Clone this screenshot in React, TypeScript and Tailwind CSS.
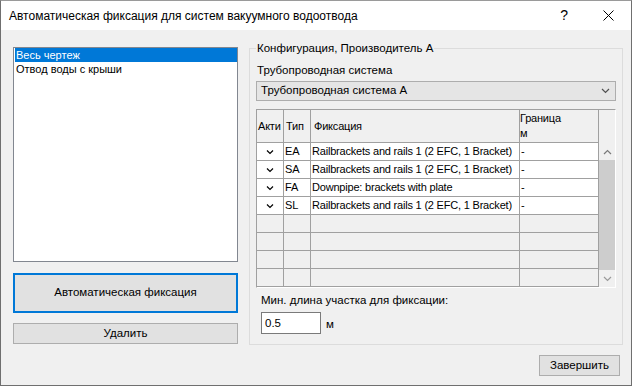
import React from 'react';

const rows = [
  { tip: 'EA', fix: 'Railbrackets and rails 1 (2 EFC, 1 Bracket)', gr: '-' },
  { tip: 'SA', fix: 'Railbrackets and rails 1 (2 EFC, 1 Bracket)', gr: '-' },
  { tip: 'FA', fix: 'Downpipe: brackets with plate', gr: '-' },
  { tip: 'SL', fix: 'Railbrackets and rails 1 (2 EFC, 1 Bracket)', gr: '-' },
];

function Check() {
  return (
    <svg width="8" height="6" viewBox="0 0 8 6">
      <path d="M1 1.5 L4 4.5 L7 1.5" fill="none" stroke="#000" strokeWidth="1.2" />
    </svg>
  );
}

function Chevron({ up = false, color = '#606060' }: { up?: boolean; color?: string }) {
  return (
    <svg width="9" height="6" viewBox="0 0 9 6">
      <path d={up ? 'M1 5 L4.5 1.5 L8 5' : 'M1 1 L4.5 4.5 L8 1'} fill="none" stroke={color} strokeWidth="1.2" />
    </svg>
  );
}

const cell = 'border-r border-b border-[#a0a0a0] flex items-center overflow-hidden whitespace-nowrap';

export default function App() {
  const empty = [0, 1, 2, 3];

  return (
    <div className="w-[632px] h-[386px] flex flex-col border border-[#6f6f6f] border-t-[#9a9a9a] bg-[#f0f0f0] text-black font-['Liberation_Sans',Arial,sans-serif] text-[11.5px] overflow-hidden">
      {/* title bar */}
      <div className="h-[29px] bg-white flex items-center pl-[8px] pr-[17px]">
        <span className="text-[12px] flex-1">Автоматическая фиксация для систем вакуумного водоотвода</span>
        <span className="text-[14px] mr-[35px] mt-[-1px]">?</span>
        <svg width="11" height="11" viewBox="0 0 11 11">
          <path d="M0.5 0.5 L10.5 10.5 M10.5 0.5 L0.5 10.5" stroke="#000" strokeWidth="1" />
        </svg>
      </div>

      <div className="flex-1 flex flex-col">
        <div className="flex items-start pl-[12px]">
          {/* left column */}
          <div className="w-[225px] pt-[17px] flex flex-col">
            <div className="h-[215px] bg-white border border-[#828790] pl-[1px] text-[11px]">
              <div className="h-[14px] bg-[#0078d7] text-white flex items-center pl-[1px]">Весь чертеж</div>
              <div className="h-[14px] flex items-center pl-[1px]">Отвод воды с крыши</div>
            </div>
            <button className="mt-[11px] h-[40px] bg-[#e1e1e1] border-2 border-[#0078d7] flex items-center justify-center">
              Автоматическая фиксация
            </button>
            <button className="mt-[10px] h-[21px] bg-[#e1e1e1] border border-[#adadad] flex items-center justify-center">
              Удалить
            </button>
          </div>

          {/* group box */}
          <div className="relative ml-[11px] mt-[18px] w-[374px] h-[297px] border border-[#dcdcdc] pl-[6px] pt-[14px]">
            <span className="absolute left-[6px] top-[-8px] leading-[14px] px-[1px] bg-[#f0f0f0]">
              Конфигурация, Производитель А
            </span>
            <div className="leading-[14px] pl-[1px]">Трубопроводная система</div>

            <div className="mt-[4px] w-[360px] h-[20px] border border-[#adadad] bg-[#e5e5e5] flex items-center pl-[4px] pr-[5px]">
              <span className="flex-1">Трубопроводная система А</span>
              <Chevron color="#505050" />
            </div>

            {/* grid */}
            <div className="mt-[8px] w-[360px] h-[179px] flex border border-t-[#a0a0a0] border-l-[#a0a0a0] border-r-white border-b-white text-[11px] tracking-[-0.2px]">
              <div className="w-[342px] grid grid-cols-[27px_27px_209px_79px] grid-rows-[33px] auto-rows-[18px] content-start">
                <div className={`${cell} pl-[1px]`}>Акти</div>
                <div className={`${cell} pl-[2px]`}>Тип</div>
                <div className={`${cell} pl-[3px]`}>Фиксация</div>
                <div className={`${cell} leading-[15px]`}>
                  <span>Граница<br />м</span>
                </div>
                {rows.map((r) => (
                  <React.Fragment key={r.tip}>
                    <div className={`${cell} bg-white justify-center`}><Check /></div>
                    <div className={`${cell} bg-white pl-[1px]`}>{r.tip}</div>
                    <div className={`${cell} bg-white pl-[1px]`}>{r.fix}</div>
                    <div className={`${cell} bg-white pl-[1px]`}>{r.gr}</div>
                  </React.Fragment>
                ))}
                {empty.map((i) => (
                  <React.Fragment key={i}>
                    <div className={cell} />
                    <div className={cell} />
                    <div className={cell} />
                    <div className={cell} />
                  </React.Fragment>
                ))}
              </div>
              <div className="w-[16px] flex flex-col">
                <div className="h-[33px]" />
                <div className="h-[17px] flex items-center justify-center"><Chevron up color="#7a7a7a" /></div>
                <div className="flex-1 bg-[#cdcdcd]" />
                <div className="h-[17px] flex items-center justify-center"><Chevron color="#9a9a9a" /></div>
              </div>
            </div>

            <div className="mt-[5px] leading-[14px] pl-[5px]">Мин. длина участка для фиксации:</div>
            <div className="mt-[5px] flex items-end pl-[5px]">
              <div className="w-[60px] h-[22px] bg-white border border-[#7a7a7a] pl-[3px] pt-[2px]">0.5</div>
              <span className="ml-[5px] mb-[4px] leading-[12px]">м</span>
            </div>
          </div>
        </div>

        <div className="flex justify-end pr-[11px] mt-[10px]">
          <button className="w-[81px] h-[21px] bg-[#e1e1e1] border border-[#adadad] flex items-center justify-center">
            Завершить
          </button>
        </div>
      </div>
    </div>
  );
}
